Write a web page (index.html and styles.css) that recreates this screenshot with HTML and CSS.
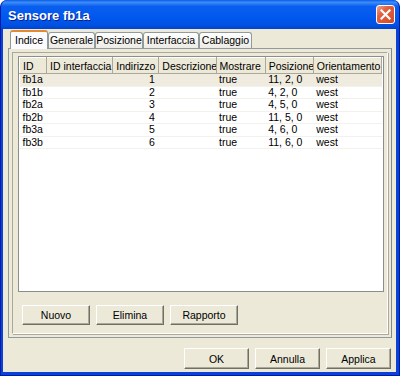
FILE: index.html
```html
<!DOCTYPE html>
<html lang="it">
<head>
  <meta charset="UTF-8">
  <title>Sensore fb1a</title>
  <link rel="stylesheet" href="styles.css">
</head>
<body>
<div class="window">
  <div class="titlebar">
    <span class="title">Sensore fb1a</span>
    <div class="close">
      <svg width="11" height="11" viewBox="0 0 11 11">
        <path d="M1.5 1.5 L9.5 9.5 M9.5 1.5 L1.5 9.5" stroke="#fff" stroke-width="2.2" stroke-linecap="square"/>
      </svg>
    </div>
  </div>
  <div class="client">
    <div class="tabs">
      <div class="tab active t-indice">Indice</div>
      <div class="tab t-generale">Generale</div>
      <div class="tab t-posizione">Posizione</div>
      <div class="tab t-interfaccia">Interfaccia</div>
      <div class="tab t-cablaggio">Cablaggio</div>
    </div>
    <div class="panel">
      <div class="group">
        <div class="scroll">
          <table class="grid">
            <colgroup>
              <col style="width:27px">
              <col style="width:66px">
              <col style="width:46px">
              <col style="width:57px">
              <col style="width:49px">
              <col style="width:48px">
              <col style="width:68px">
            </colgroup>
            <thead>
              <tr>
                <th>ID</th>
                <th>ID interfaccia</th>
                <th>Indirizzo</th>
                <th>Descrizione</th>
                <th>Mostrare</th>
                <th>Posizione</th>
                <th>Orientamento</th>
              </tr>
            </thead>
            <tbody>
              <tr class="selected"><td>fb1a</td><td></td><td class="num">1</td><td></td><td>true</td><td>11, 2, 0</td><td>west</td></tr>
              <tr><td>fb1b</td><td></td><td class="num">2</td><td></td><td>true</td><td>4, 2, 0</td><td>west</td></tr>
              <tr><td>fb2a</td><td></td><td class="num">3</td><td></td><td>true</td><td>4, 5, 0</td><td>west</td></tr>
              <tr><td>fb2b</td><td></td><td class="num">4</td><td></td><td>true</td><td>11, 5, 0</td><td>west</td></tr>
              <tr><td>fb3a</td><td></td><td class="num">5</td><td></td><td>true</td><td>4, 6, 0</td><td>west</td></tr>
              <tr><td>fb3b</td><td></td><td class="num">6</td><td></td><td>true</td><td>11, 6, 0</td><td>west</td></tr>
            </tbody>
          </table>
        </div>
        <div class="actions">
          <button class="btn">Nuovo</button>
          <button class="btn">Elimina</button>
          <button class="btn">Rapporto</button>
        </div>
      </div>
    </div>
    <div class="footer">
      <button class="btn wide">OK</button>
      <button class="btn wide">Annulla</button>
      <button class="btn wide">Applica</button>
    </div>
  </div>
</div>
</body>
</html>
```

FILE: styles.css
```css
body {
  margin: 0;
  font-family: "Liberation Sans", Arial, sans-serif;
  font-size: 10.5px;
  color: #000;
  background: #fff;
}
.window {
  width: 400px;
  height: 376px;
  box-sizing: border-box;
  background: #0842d6;
  border-radius: 7px 7px 0 0;
  border: 1px solid #0019a8;
  border-top: none;
  display: flex;
  flex-direction: column;
  overflow: hidden;
}
.titlebar {
  height: 29px;
  flex-shrink: 0;
  display: flex;
  align-items: center;
  justify-content: space-between;
  padding: 0 4px 0 7px;
  background: linear-gradient(to bottom, #0a5ce8 0%, #3d8cf8 8%, #0a5fef 22%, #0058ee 60%, #0052e2 85%, #0043cf 100%);
  border-radius: 7px 7px 0 0;
}
.title {
  color: #fff;
  font-weight: bold;
  font-size: 13px;
  text-shadow: 1px 1px 0 #0a1e8e;
  padding-top: 1px;
}
.close {
  width: 19px;
  height: 19px;
  box-sizing: border-box;
  border: 1px solid #fff;
  border-radius: 3px;
  background: linear-gradient(135deg, #f3a48c 0%, #e2613f 35%, #d24a28 100%);
  display: flex;
  align-items: center;
  justify-content: center;
}
.client {
  flex: 1;
  margin: 0 3px 3px 2px;
  background: #ece9d8;
  padding: 1px 4px 0 5px;
  display: flex;
  flex-direction: column;
}
.tabs {
  display: flex;
  align-items: flex-end;
  height: 18px;
  padding-left: 2px;
  position: relative;
  z-index: 1;
}
.tab {
  height: 16px;
  box-sizing: border-box;
  padding-top: 1px;
  border: 1px solid #919b9c;
  border-bottom: none;
  border-radius: 3px 3px 0 0;
  background: linear-gradient(to bottom, #fff, #ecebe5);
  line-height: 13px;
  white-space: nowrap;
  text-align: center;
}
.tab.active {
  height: 19px;
  margin-bottom: -1px;
  padding-top: 2px;
  background: #fcfcfe;
  border-top: 2px solid #e68b2c;
}
.t-indice { width: 38px; }
.t-generale { width: 47px; }
.t-posizione { width: 48px; }
.t-interfaccia { width: 56px; }
.t-cablaggio { width: 53px; }
.panel {
  height: 290px;
  box-sizing: border-box;
  border: 1px solid #919b9c;
  border-right-color: #7f8a8b;
  background: #ece9d8;
  padding: 3px;
}
.group {
  height: 100%;
  box-sizing: border-box;
  border: 1px solid #aca899;
  border-right-color: #fff;
  border-bottom-color: #fff;
  box-shadow: 1px 1px 0 #aca899;
  background: #ece9d8;
  padding: 3px 3px 0 5px;
}
.scroll {
  height: 236px;
  box-sizing: border-box;
  border: 1px solid #8d8d8d;
  background: #fff;
  overflow: hidden;
}
.grid {
  border-collapse: collapse;
  table-layout: fixed;
  width: 363px;
}
.grid th {
  height: 16px;
  box-sizing: border-box;
  padding: 0 2px 0 3px;
  font-weight: normal;
  text-align: left;
  background: #ece9d8;
  border: 1px solid;
  border-color: #fff #aca899 #aca899 #fff;
  white-space: nowrap;
  overflow: hidden;
  line-height: 14px;
}
.grid td {
  height: 11.5px;
  padding: 0 3px;
  line-height: 11px;
  border-bottom: 1px solid #f2f1ec;
  white-space: nowrap;
}
.grid td.num {
  text-align: right;
  padding-right: 4px;
}
.grid tr.selected td {
  background: #efebde;
}
.actions {
  display: flex;
  gap: 6px;
  padding: 13px 0 0 4px;
}
.btn {
  font-family: inherit;
  font-size: 10.5px;
  color: #000;
  width: 68px;
  height: 20px;
  box-sizing: border-box;
  background: #ece9d8;
  border: 1px solid;
  border-color: #fff #716f64 #716f64 #fff;
  box-shadow: inset -1px -1px 0 #aca899;
  padding: 0;
}
.footer {
  display: flex;
  justify-content: flex-end;
  gap: 6px;
  padding: 10px 1px 0 0;
}
.btn.wide {
  width: 65px;
  height: 21px;
}
```
